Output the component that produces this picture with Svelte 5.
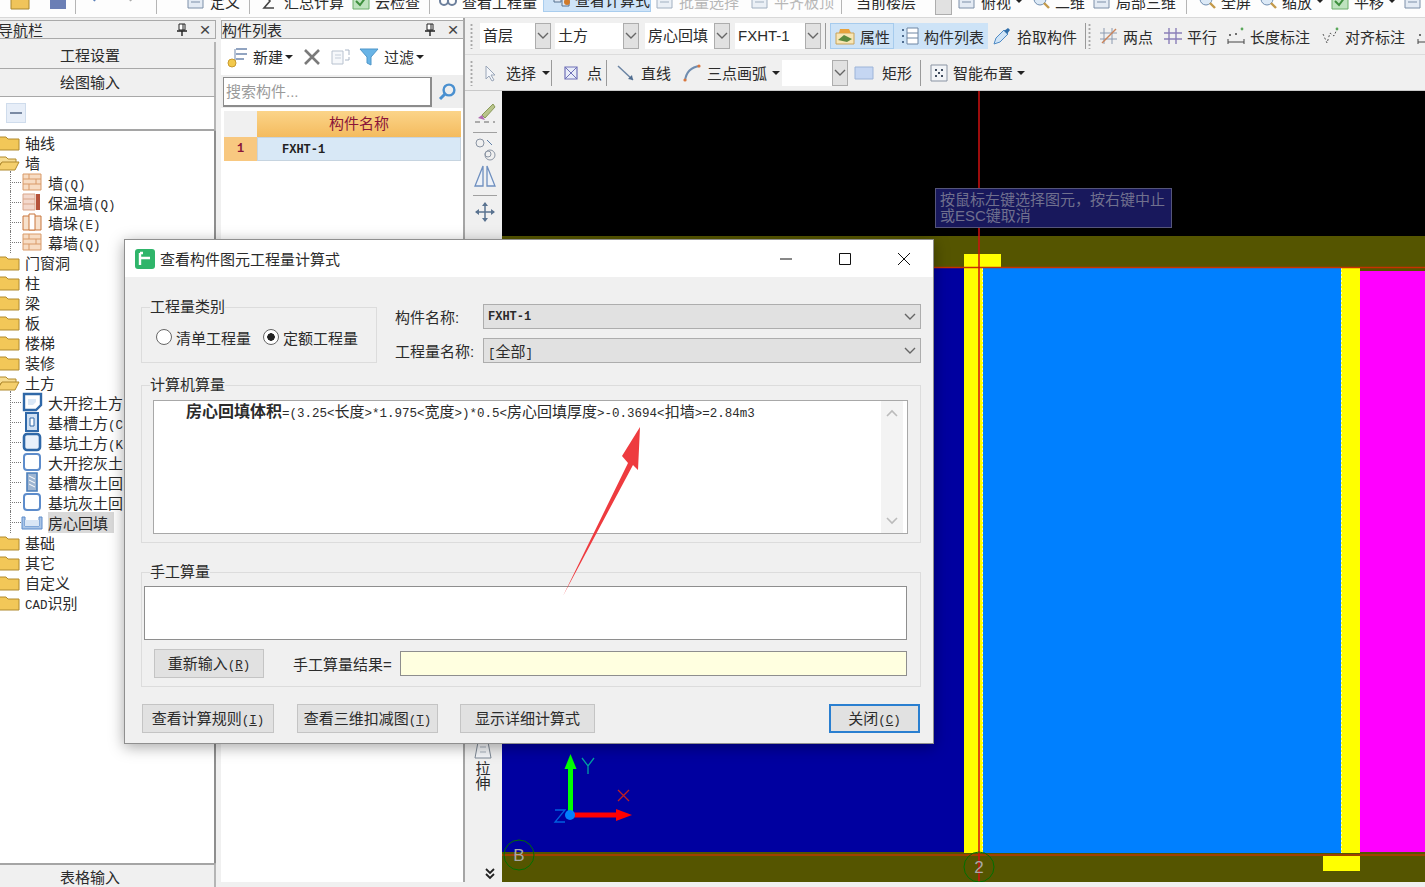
<script>
  const topItems = [
    { icon: 'folder', w: 38 }, { icon: 'save', w: 27 }, { sep: true, w: 15 },
    { icon: 'undo', w: 25 }, { icon: 'redo', w: 41 }, { sep: true, w: 20 }, { grip: true, w: 10 },
    { icon: 'doc', label: '定义', w: 63 }, { sep: true, w: 11 },
    { icon: 'sum', label: '汇总计算', w: 91 }, { icon: 'check', label: '云检查', w: 78 }, { sep: true, w: 9 },
    { icon: 'link', label: '查看工程量', w: 105 }, { icon: 'calc', label: '查看计算式', w: 108, active: true },
    { w: 4 }, { icon: 'doc', label: '批量选择', w: 95, dim: true }, { icon: 'doc', label: '平齐板顶', w: 91, dim: true },
    { sep: true, w: 15 }, { label: '当前楼层', w: 79 }, { combo: true, w: 22 },
    { icon: 'doc', label: '俯视', w: 74, caret: true }, { icon: 'zoom', label: '二维', w: 61 },
    { icon: 'doc', label: '局部三维', w: 94 }, { sep: true, w: 11 },
    { icon: 'zoom', label: '全屏', w: 61 }, { icon: 'zoom', label: '缩放', w: 72, caret: true },
    { icon: 'check', label: '平移', w: 73, caret: true }, { icon: 'doc', w: 22 }
  ];

  const combos = [
    { label: '首层', w: 55, gap: 4 },
    { label: '土方', w: 68, gap: 6 },
    { label: '房心回填', w: 69, gap: 5 },
    { label: 'FXHT-1', w: 70, gap: 0 }
  ];

  const tree = [
    { label: '轴线', kind: 'closed' },
    { label: '墙', kind: 'open' },
    { label: '墙(Q)', kind: 'brick', child: true },
    { label: '保温墙(Q)', kind: 'insul', child: true },
    { label: '墙垛(E)', kind: 'pier', child: true },
    { label: '幕墙(Q)', kind: 'brick', child: true },
    { label: '门窗洞', kind: 'closed' },
    { label: '柱', kind: 'closed' },
    { label: '梁', kind: 'closed' },
    { label: '板', kind: 'closed' },
    { label: '楼梯', kind: 'closed' },
    { label: '装修', kind: 'closed' },
    { label: '土方', kind: 'open' },
    { label: '大开挖土方', kind: 'notch', child: true },
    { label: '基槽土方(C', kind: 'trench', child: true },
    { label: '基坑土方(K', kind: 'pit', child: true },
    { label: '大开挖灰土', kind: 'blank', child: true },
    { label: '基槽灰土回', kind: 'hatch', child: true },
    { label: '基坑灰土回', kind: 'blank', child: true },
    { label: '房心回填', kind: 'fill', child: true, selected: true },
    { label: '基础', kind: 'closed' },
    { label: '其它', kind: 'closed' },
    { label: '自定义', kind: 'closed' },
    { label: 'CAD识别', kind: 'closed' }
  ];

  const formula = '=(3.25<长度>*1.975<宽度>)*0.5<房心回填厚度>-0.3694<扣墙>=2.84m3';
</script>

{#snippet mixed(text)}{#each text.split(/([\x00-\x7f]+)/) as part, i}{#if i % 2}<span class="ascii">{part}</span>{:else}{part}{/if}{/each}{/snippet}

{#snippet pin()}
  <svg class="dock-pin" width="10" height="13" viewBox="0 0 10 13"><path d="M2 1h6v6H2z" fill="#fff" stroke="#222" /><path d="M6 1v6" stroke="#222" /><path d="M0 8h10M5 8v5" stroke="#222" stroke-width="1.4" /></svg>
{/snippet}

{#snippet icon(name)}
  <svg class="ic" width="20" height="20" viewBox="0 0 20 20">
    {#if name === 'folder'}
      <path d="M1 5h7l2 2h9v11H1z" fill="#f0c45a" stroke="#a8862f" />
    {:else if name === 'save'}
      <path d="M2 2h16v16H2z" fill="#6b7fb5" /><path d="M5 2h10v7H5z" fill="#dfe6f2" />
    {:else if name === 'undo'}
      <path d="M4 10c3-6 9-6 13-2" fill="none" stroke="#5a7fb8" stroke-width="2" />
    {:else if name === 'redo'}
      <path d="M16 10c-3-6-9-6-13-2" fill="none" stroke="#aaa" stroke-width="2" />
    {:else if name === 'doc'}
      <path d="M2 2h15v15H2z" fill="#e4ebf4" stroke="#7d8fa8" /><path d="M5 7h9M5 11h9" stroke="#7d8fa8" />
    {:else if name === 'sum'}
      <path d="M14 3H4l6 7-6 7h10" fill="none" stroke="#444" stroke-width="1.6" />
    {:else if name === 'check'}
      <path d="M2 2h16v16H2z" fill="#bfe3bf" stroke="#6aae6a" /><path d="M5 10l4 4 6-8" fill="none" stroke="#3d8f3d" stroke-width="2" />
    {:else if name === 'link'}
      <circle cx="6" cy="10" r="4" fill="none" stroke="#6c7f9c" stroke-width="2" /><circle cx="14" cy="10" r="4" fill="none" stroke="#6c7f9c" stroke-width="2" />
    {:else if name === 'calc'}
      <path d="M2 6h7v7H2zM10 10h7v7h-7z" fill="#dfe8f4" stroke="#54708f" /><circle cx="15" cy="13" r="3" fill="#d07a2a" />
    {:else if name === 'zoom'}
      <circle cx="9" cy="8" r="6" fill="#dce9f6" stroke="#6f8db0" /><path d="M13 12l5 5" stroke="#c49a4a" stroke-width="2.4" />
    {:else if name === 'attr'}
      <path d="M1 7h18v11H1z" fill="#f8e6b4" stroke="#c7a25a" /><path d="M3 14l6-5 8 4-5 3z" fill="#5d8a3e" /><path d="M5 3h9l2 4H4z" fill="#e8a23c" />
    {:else if name === 'list'}
      <path d="M7 2h11v16H7z" fill="#fff" stroke="#6f86a3" /><path d="M7 7h11M7 12h11" stroke="#6f86a3" /><path d="M2 4h3M2 10h3M2 16h3" stroke="#4f6c8f" stroke-width="2" stroke-dasharray="2 1" />
    {:else if name === 'pick'}
      <path d="M2 18l2-6 8-8 4 4-8 8z" fill="#cfe4f7" stroke="#4f8ac4" /><path d="M12 5l4-3 2 2-3 4z" fill="#2f6eaa" />
    {:else if name === 'two'}
      <path d="M5 2v16M13 2v16M1 7h17M1 13h17" stroke="#8c9ab0" /><path d="M3 17L17 3" stroke="#c9835a" stroke-width="1.5" />
    {:else if name === 'para'}
      <path d="M6 2v16M13 2v16M1 7h18M1 13h18" stroke="#8a7fb8" stroke-width="1.4" />
    {:else if name === 'dim'}
      <path d="M2 13v5M18 13v5M2 16h16" stroke="#444" /><circle cx="4" cy="9" r="1" fill="#444" /><circle cx="10" cy="8" r="1" fill="#444" /><circle cx="16" cy="3" r="1.4" fill="#5aa85a" />
    {:else if name === 'dim2'}
      <path d="M2 8l4 9 3-10 4 3 3-7" fill="none" stroke="#555" stroke-dasharray="2 2" /><circle cx="16" cy="3" r="1.4" fill="#5aa85a" />
    {:else if name === 'cursor'}
      <path d="M6 3v13l3-3 3 5 2-1-3-5h4z" fill="#f4f6fa" stroke="#9aa6b8" />
    {:else if name === 'point'}
      <path d="M4 4h12v12H4z" fill="#e8ecf8" stroke="#6f70b8" stroke-width="1.2" /><path d="M4 4l12 12M16 4L4 16" stroke="#6f70b8" />
    {:else if name === 'line'}
      <path d="M2 3l15 14" stroke="#6b84a3" stroke-width="1.5" /><path d="M17 17l-5-1 4-4z" fill="#4f6c8f" />
    {:else if name === 'arc'}
      <path d="M3 18C4 9 9 4 18 3" fill="none" stroke="#6f8db0" stroke-width="2" /><circle cx="3" cy="17" r="1.6" fill="#d9763c" /><circle cx="17" cy="3" r="1.6" fill="#d9763c" />
    {:else if name === 'rect'}
      <path d="M1 4h18v12H1z" fill="#c5d6f2" stroke="#9db4d8" />
    {:else if name === 'smart'}
      <path d="M2 2h16v16H2z" fill="#f2f4f7" stroke="#8a94a3" /><path d="M6 6h2v2H6zM12 6h2v2h-2zM6 12h2v2H6zM12 12h2v2h-2zM9 9h2v2H9z" fill="#3f4c5e" />
    {/if}
  </svg>
{/snippet}

{#snippet treeIcon(kind)}
  <svg class="tree-ic" width="22" height="20" viewBox="0 0 22 20">
    {#if kind === 'closed'}
      <path d="M-3 5h9l2 2h11v11H-3z" fill="#f2c758" stroke="#b08a2e" />
    {:else if kind === 'open'}
      <path d="M-3 5h9l2 2h8v4H1l-4 7z" fill="#f7dc91" stroke="#b08a2e" /><path d="M-3 18l5-8h17l-4 8z" fill="#f5cf6c" stroke="#b08a2e" />
    {:else if kind === 'brick'}
      <path d="M2 2h18v16H2z" fill="#f7dcc3" stroke="#d99a68" /><path d="M2 7h18M2 12h18M8 2v5M15 7v5M8 12v6" stroke="#d99a68" />
    {:else if kind === 'insul'}
      <path d="M2 2h12v16H2z" fill="#f3d8cc" stroke="#d9a58a" /><path d="M15 2h4v16h-4z" fill="#b5523a" /><path d="M2 7h12M2 12h12" stroke="#d9a58a" />
    {:else if kind === 'pier'}
      <path d="M2 4h18v14H2z" fill="#f7e1cc" stroke="#c9763c" /><path d="M8 2h6v16H8z" fill="#fff" stroke="#c9763c" />
    {:else if kind === 'notch'}
      <path d="M3 2h17v11l-5 5H3z" fill="#fff" stroke="#2f68a8" stroke-width="2.4" /><path d="M7 7h8v3l-3 3H7z" fill="#dbe8f6" />
    {:else if kind === 'trench'}
      <path d="M5 1h12v18H5z" fill="#cfe0f3" stroke="#2f68a8" stroke-width="2" /><path d="M9 6h4v8H9z" fill="#fff" stroke="#2f68a8" />
    {:else if kind === 'pit'}
      <rect x="3" y="2" width="16" height="16" rx="3" fill="#e8f0fa" stroke="#2f68a8" stroke-width="2.6" />
    {:else if kind === 'blank'}
      <rect x="3" y="2" width="16" height="16" rx="3" fill="#fff" stroke="#5d8ccb" stroke-width="2" />
    {:else if kind === 'hatch'}
      <path d="M6 1h10v18H6z" fill="#9fb6d2" stroke="#4c7fbb" stroke-width="1.6" /><path d="M8 4l6 3M8 8l6 3M8 12l6 3" stroke="#fff" />
    {:else if kind === 'fill'}
      <path d="M1 5h3v9h14V5h3v12H1z" fill="#a9c4e6" stroke="#5d8ccb" /><path d="M4 8h14v6H4z" fill="#dae6f5" />
    {/if}
  </svg>
{/snippet}

{#snippet chevron()}
  <svg width="12" height="8" viewBox="0 0 12 8"><path d="M1 1l5 5 5-5" fill="none" stroke="#666" stroke-width="1.4" /></svg>
{/snippet}

<div class="app">
  <div class="topbar">
    {#each topItems as item}
      <div class="top-item" class:active={item.active} class:dim={item.dim} class:top-sep={item.sep} style="width: {item.w}px">
        {#if item.combo}<span class="top-combo"></span>{/if}
        {#if item.icon}{@render icon(item.icon)}{/if}
        {#if item.label}<span>{item.label}</span>{/if}
        {#if item.caret}<i class="caret"></i>{/if}
      </div>
    {/each}
  </div>

  <div class="main">
    <aside class="nav">
      <div class="dock-head nav-head">
        <span class="dock-title">导航栏</span>
        {@render pin()}
        <span class="dock-close">×</span>
      </div>
      <div class="nav-btn first">工程设置</div>
      <div class="nav-btn">绘图输入</div>
      <div class="tree-tools">
        <span class="minus"><i></i></span>
      </div>
      <div class="tree">
        {#each tree as row}
          <div class="tree-row" class:child={row.child}>
            {#if row.child}<i class="dots"></i>{/if}
            {@render treeIcon(row.kind)}
            <span class="tree-label" class:selected={row.selected}>{@render mixed(row.label)}</span>
          </div>
        {/each}
      </div>
      <div class="nav-btn nav-bottom">表格输入</div>
    </aside>

    <section class="list">
      <div class="dock-head">
        <span class="dock-title list-title">构件列表</span>
        {@render pin()}
        <span class="dock-close">×</span>
      </div>
      <div class="list-tools">
        <svg width="28" height="26" viewBox="0 0 28 26">
          <path d="M11 5h11M11 10h11M11 15h8" stroke="#6d86ad" stroke-width="1.6" /><path d="M10 5v12" stroke="#6d86ad" />
          <circle cx="7" cy="19" r="4" fill="#f2c94c" stroke="#c99a2e" />
        </svg>
        <span class="lt-new">新建</span><i class="caret"></i>
        <svg class="lt-x" width="16" height="16" viewBox="0 0 16 16"><path d="M1 1l14 14M15 1L1 15" stroke="#7a7a7a" stroke-width="2.6" /></svg>
        <svg class="lt-copy" width="20" height="18" viewBox="0 0 20 18"><path d="M1 3h11v13H1z" fill="#f6f8fb" stroke="#b8c2cf" /><path d="M4 7h6M4 10h6" stroke="#c5ced9" /><path d="M14 2h4v5M14 12h4V9" fill="none" stroke="#aab6c6" /></svg>
        <svg class="lt-filter" width="20" height="18" viewBox="0 0 20 18"><path d="M1 1h18l-7 8v8l-4-2V9z" fill="#69b4e6" stroke="#4f96c9" /></svg>
        <span class="lt-filter-text">过滤</span><i class="caret"></i>
      </div>
      <div class="search">
        <input class="search-input" placeholder="搜索构件..." />
        <svg class="search-ic" width="20" height="20" viewBox="0 0 20 20"><circle cx="11" cy="8" r="5.4" fill="none" stroke="#4a90d0" stroke-width="2.4" /><path d="M7 12l-5 5" stroke="#4a90d0" stroke-width="3" /></svg>
      </div>
      <div class="grid">
        <div class="corner"></div>
        <div class="col-head">构件名称</div>
        <div class="row-no">1</div>
        <div class="row-name">FXHT-1</div>
      </div>
    </section>

    <section class="work">
      <div class="bar bar-one">
        <i class="grip"></i>
        {#each combos as c}
          <div class="combo" style="margin-right: {c.gap}px">
            <span class="combo-text" style="width: {c.w}px">{c.label}</span>
            <span class="combo-btn">{@render chevron()}</span>
          </div>
        {/each}
        <i class="vsep"></i>
        <div class="tool on w-attr">{@render icon('attr')}<span>属性</span></div>
        <div class="tool on2 w-list">{@render icon('list')}<span>构件列表</span></div>
        <div class="tool w-pick">{@render icon('pick')}<span>拾取构件</span></div>
        <i class="vsep wide"></i>
        <i class="grip"></i>
        <div class="tool w-two">{@render icon('two')}<span>两点</span></div>
        <div class="tool w-two">{@render icon('para')}<span>平行</span></div>
        <div class="tool w-dim">{@render icon('dim')}<span>长度标注</span></div>
        <div class="tool w-dim">{@render icon('dim2')}<span>对齐标注</span></div>
        <div class="tool cut">{@render icon('dim')}</div>
      </div>

      <div class="bar bar-two">
        <i class="grip"></i>
        <div class="tool t-sel">{@render icon('cursor')}<span>选择</span><i class="caret"></i></div>
        <i class="vsep"></i>
        <div class="tool t-pt">{@render icon('point')}<span>点</span></div>
        <i class="vsep"></i>
        <div class="tool t-line">{@render icon('line')}<span>直线</span></div>
        <div class="tool t-arc">{@render icon('arc')}<span>三点画弧</span><i class="caret"></i></div>
        <div class="combo t-combo">
          <span class="combo-text blank"></span>
          <span class="combo-btn">{@render chevron()}</span>
        </div>
        <div class="tool t-rect">{@render icon('rect')}<span>矩形</span></div>
        <i class="vsep"></i>
        <div class="tool t-smart">{@render icon('smart')}<span>智能布置</span><i class="caret"></i></div>
      </div>

      <div class="stage">
        <div class="vbar">
          <svg class="v-ic" width="24" height="24" viewBox="0 0 24 24"><path d="M20 3L9 14l3 3L22 6z" fill="#b8c48a" stroke="#8a9a5a" /><path d="M9 14l-4 3 7 2z" fill="#b06ab0" /><path d="M2 21h20" stroke="#666" stroke-dasharray="5 4" /></svg>
          <i class="v-sep"></i>
          <svg class="v-ic tight" width="24" height="24" viewBox="0 0 24 24"><circle cx="7" cy="6" r="4" fill="none" stroke="#8a94a3" /><circle cx="17" cy="18" r="5" fill="none" stroke="#8a94a3" /><circle cx="15" cy="17" r="3" fill="none" stroke="#8a94a3" /><path d="M14 3l5 5" stroke="#5d7fa8" /></svg>
          <svg class="v-ic tight" width="24" height="24" viewBox="0 0 24 24"><path d="M10 2v20H2zM14 2v20h8z" fill="#eef2f8" stroke="#6e8fbf" stroke-width="1.3" /></svg>
          <i class="v-sep"></i>
          <svg class="v-ic" width="20" height="20" viewBox="0 0 20 20"><path d="M10 1v18M1 10h18" stroke="#5a7390" stroke-width="1.5" /><path d="M10 0l3 4H7zM10 20l3-4H7zM0 10l4-3v6zM20 10l-4-3v6z" fill="#5a7390" /></svg>
          <div class="v-stretch">
            <svg width="22" height="18" viewBox="0 0 22 18"><path d="M3 17L6 1h10l3 16z" fill="#f4f6f9" stroke="#7c8794" /><path d="M8 6h6M8 11h6" stroke="#a8b1bd" /></svg>
            <span class="first-char">拉</span>
            <span>伸</span>
          </div>
          <svg class="v-more" width="10" height="12" viewBox="0 0 10 12"><path d="M1 1l4 4 4-4M1 6l4 4 4-4" fill="none" stroke="#222" stroke-width="1.8" /></svg>
        </div>

        <svg class="canvas" width="923" height="791" viewBox="502 91 923 791">
          <rect x="502" y="91" width="923" height="791" fill="#000" />
          <rect x="502" y="236" width="923" height="646" fill="#555500" />
          <rect x="502" y="268" width="462" height="584" fill="#0000a0" />
          <rect x="983" y="268" width="358" height="585" fill="#0080ff" />
          <rect x="1360" y="271" width="65" height="581" fill="#ff00ff" />
          <rect x="964" y="268" width="19" height="585" fill="#ffff00" />
          <rect x="1341" y="268" width="19" height="585" fill="#ffff00" />
          <rect x="964" y="254" width="37" height="13" fill="#ffff00" />
          <rect x="1323" y="856" width="37" height="15" fill="#ffff00" />
          <path d="M982.5 268v585M1341.5 268v585" stroke="#fff" stroke-dasharray="2 2" opacity=".7" />
          <path d="M502 267.5h923" stroke="#c83200" stroke-width="1.5" />
          <path d="M502 855h923" stroke="#a04000" stroke-width="2" />
          <path d="M979 91v791" stroke="#d01010" stroke-width="1.5" />

          <rect x="935.5" y="188.5" width="236" height="39" fill="#18185c" stroke="#55557a" />
          <text x="940" y="205" class="tip">按鼠标左键选择图元，按右键中止</text>
          <text x="940" y="221" class="tip">或ESC键取消</text>

          <path d="M570.5 815v-50" stroke="#00ff00" stroke-width="5" />
          <path d="M570.5 754l6 15h-12z" fill="#00ff00" />
          <path d="M570 815h48" stroke="#ff0000" stroke-width="5" />
          <path d="M632 815l-16-6v12z" fill="#ff0000" />
          <circle cx="570" cy="815" r="5" fill="#0080ff" />
          <path d="M582 758l6 8 6-8M588 766v8" stroke="#00a0a0" stroke-width="1.3" fill="none" />
          <path d="M618 790l11 11M629 790l-11 11" stroke="#c02020" stroke-width="1.3" />
          <path d="M555 810h10l-10 12h10" stroke="#0060e0" stroke-width="1.3" fill="none" />

          <circle cx="519" cy="855" r="15" fill="none" stroke="#007000" />
          <text x="519" y="861" class="axis">B</text>
          <circle cx="979" cy="867" r="15" fill="none" stroke="#007000" />
          <text x="979" y="873" class="axis">2</text>
        </svg>
      </div>
      <div class="foot"></div>
    </section>
  </div>

  <div class="dialog">
    <header class="dlg-title">
      <svg width="20" height="20" viewBox="0 0 20 20"><rect width="20" height="20" rx="3" fill="#2fb56a" /><path d="M5 4v12M5 9h10M5 4h3" stroke="#fff" stroke-width="2.4" fill="none" /></svg>
      <span class="dlg-name">查看构件图元工程量计算式</span>
      <span class="win-btn"><svg width="14" height="14" viewBox="0 0 14 14"><path d="M1 7h12" stroke="#111" /></svg></span>
      <span class="win-btn"><svg width="14" height="14" viewBox="0 0 14 14"><path d="M1.5 1.5h11v11h-11z" fill="none" stroke="#111" /></svg></span>
      <span class="win-btn"><svg width="14" height="14" viewBox="0 0 14 14"><path d="M1 1l12 12M13 1L1 13" stroke="#111" /></svg></span>
    </header>

    <div class="dlg-body">
      <div class="dlg-top">
        <fieldset class="kind">
          <legend>工程量类别</legend>
          <div class="kind-row">
            <label class="radio"><i class="dot"></i>清单工程量</label>
            <label class="radio"><i class="dot on"></i>定额工程量</label>
          </div>
        </fieldset>
        <div class="fields">
          <div class="field">
            <span class="field-label">构件名称:</span>
            <div class="select"><span class="mono">FXHT-1</span>{@render chevron()}</div>
          </div>
          <div class="field">
            <span class="field-label">工程量名称:</span>
            <div class="select"><span>{@render mixed('[全部]')}</span>{@render chevron()}</div>
          </div>
        </div>
      </div>

      <fieldset class="auto">
        <legend>计算机算量</legend>
        <div class="formula">
          <p class="formula-text"><b>房心回填体积</b>{@render mixed(formula)}</p>
          <div class="scroll">
            <svg width="12" height="8" viewBox="0 0 12 8"><path d="M1 7l5-5 5 5" fill="none" stroke="#bbb" stroke-width="1.6" /></svg>
            <svg width="12" height="8" viewBox="0 0 12 8"><path d="M1 1l5 5 5-5" fill="none" stroke="#bbb" stroke-width="1.6" /></svg>
          </div>
        </div>
      </fieldset>

      <fieldset class="manual">
        <legend>手工算量</legend>
        <div class="manual-box"></div>
        <div class="manual-row">
          <button class="btn redo-btn">重新输入<span class="ascii">(<u>R</u>)</span></button>
          <span class="result-label">手工算量结果=</span>
          <div class="result"></div>
        </div>
      </fieldset>

      <div class="actions">
        <button class="btn a1">查看计算规则<span class="ascii">(<u>I</u>)</span></button>
        <button class="btn a2">查看三维扣减图<span class="ascii">(<u>T</u>)</span></button>
        <button class="btn a3">显示详细计算式</button>
        <button class="btn close">关闭<span class="ascii">(<u>C</u>)</span></button>
      </div>
    </div>
  </div>

  <svg class="note" width="1425" height="887" viewBox="0 0 1425 887">
    <path d="M563 596L628 463l-6-7 18-29-2 43-5-5z" fill="#ee3b3f" />
  </svg>
</div>

<style>
  :global(body) {
    margin: 0;
    background: #f0f0f0;
    font-family: "Liberation Sans", "Noto Sans CJK SC", sans-serif;
    font-size: 15px;
    color: #2b2b2b;
  }

  .app {
    position: relative;
    width: 1425px;
    height: 887px;
    overflow: hidden;
    display: flex;
    flex-direction: column;
  }

  .ic {
    flex: none;
  }

  .ascii {
    font-family: "Liberation Mono", monospace;
    font-size: 12.5px;
  }

  .caret {
    flex: none;
    width: 0;
    height: 0;
    border-left: 4px solid transparent;
    border-right: 4px solid transparent;
    border-top: 4px solid #222;
  }

  /* top toolbar, cut off by the window edge */
  .topbar {
    height: 17px;
    flex: none;
    padding-left: 10px;
    display: flex;
    overflow: hidden;
    background: #fdfdfd;
    border-bottom: 1px solid #d8d8d8;
  }

  .top-item {
    flex: none;
    height: 20px;
    margin-top: -9px;
    display: flex;
    align-items: center;
    gap: 4px;
    white-space: nowrap;
    box-sizing: border-box;
  }

  .top-item.active {
    height: 26px;
    background: #cfe4f8;
    border: 1px solid #a9cdee;
    padding-left: 8px;
    gap: 3px;
    margin-top: -14px;
  }

  .top-item.dim {
    color: #9a9a9a;
    opacity: 0.7;
  }

  .top-sep::before {
    content: '';
    width: 1px;
    height: 26px;
    background: #b5b5b5;
  }

  .top-combo {
    width: 15px;
    height: 26px;
    background: #e1e1e1;
    border: 1px solid #adadad;
  }

  .main {
    flex: 1;
    display: flex;
    min-height: 0;
  }

  /* docked panels */
  .dock-head {
    height: 17px;
    margin-top: 2px;
    flex: none;
    display: flex;
    align-items: center;
    background: #eeeeee;
    border: 1px solid #a9a9a9;
    border-left: none;
    overflow: hidden;
  }

  .dock-title {
    margin-left: -2px;
    flex: 1;
    font-size: 15px;
  }

  .list-title {
    margin-left: 0;
  }

  .dock-pin {
    flex: none;
    margin-right: 8px;
  }

  .dock-close {
    width: 20px;
    font-size: 19px;
    line-height: 17px;
    text-align: center;
    color: #444;
  }

  .nav {
    width: 216px;
    flex: none;
    margin-right: 5px;
    display: flex;
    flex-direction: column;
  }

  .nav-btn {
    height: 27px;
    flex: none;
    background: #f0f0f0;
    border-bottom: 1px solid #a8a8a8;
    border-right: 2px solid #b5b5b5;
    box-sizing: content-box;
    width: 214px;
    text-align: center;
    line-height: 27px;
    text-indent: -34px;
  }

  .nav-btn.first {
    height: 26px;
    margin-top: 3px;
  }

  .tree-tools {
    height: 32px;
    flex: none;
    width: 214px;
    background: #fff;
    border-right: 2px solid #b5b5b5;
    border-bottom: 2px solid #a5a5a5;
    box-sizing: content-box;
    display: flex;
    align-items: center;
  }

  .minus {
    width: 18px;
    height: 18px;
    margin-left: 6px;
    display: flex;
    align-items: center;
    justify-content: center;
    background: #e7eef8;
    border: 1px solid #cfdcec;
  }

  .minus i {
    width: 12px;
    height: 2px;
    background: #7a8aa3;
  }

  .tree {
    flex: 1;
    width: 214px;
    background: #fff;
    border-right: 2px solid #8e8e8e;
    padding-top: 1px;
    box-sizing: content-box;
  }

  .tree-row {
    height: 20px;
    display: flex;
    align-items: center;
    white-space: nowrap;
  }

  .tree-ic {
    flex: none;
    overflow: visible;
  }

  .tree-label {
    margin-left: 3px;
  }

  .tree-row.child {
    padding-left: 10px;
    position: relative;
  }

  .dots {
    width: 11px;
    border-top: 1px dotted #777;
  }

  .tree-row.child .tree-label {
    margin-left: 5px;
  }

  .tree-row.child::before {
    content: '';
    position: absolute;
    left: 10px;
    top: -1px;
    height: 22px;
    border-left: 1px dotted #777;
  }

  .tree-label.selected {
    background: #d9d9d9;
    padding: 0 6px 0 0;
  }

  .nav-bottom {
    height: 22px;
    line-height: 26px;
    border-bottom: none;
    border-top: 2px solid #a5a5a5;
  }

  .list {
    width: 244px;
    flex: none;
    display: flex;
    flex-direction: column;
    background: #fff;
    border-right: 2px solid #a5a5a5;
    box-sizing: border-box;
    height: 864px;
  }

  .list .dock-head {
    border-left: 1px solid #a9a9a9;
    margin-right: -1px;
  }

  .list-tools {
    height: 31px;
    flex: none;
    margin-top: 3px;
    padding: 0 0 2px 4px;
    box-sizing: border-box;
    display: flex;
    align-items: center;
  }

  .lt-new {
    margin-right: 2px;
  }

  .lt-x {
    margin-left: 11px;
  }

  .lt-copy {
    margin-left: 11px;
  }

  .lt-filter {
    margin-left: 8px;
  }

  .lt-filter-text {
    margin-left: 5px;
    margin-right: 2px;
  }

  .search {
    height: 33px;
    flex: none;
    margin-top: 2px;
    display: flex;
    align-items: center;
    background: #eeeeee;
  }

  .search-input {
    width: 209px;
    height: 30px;
    margin-left: 2px;
    box-sizing: border-box;
    border: 1px solid #8c8c8c;
    border-bottom-width: 2px;
    border-right-width: 2px;
    padding: 0 2px;
    font: inherit;
    background: #fff;
  }

  .search-input::placeholder {
    color: #9a9a9a;
  }

  .search-ic {
    margin-left: 6px;
  }

  .grid {
    margin: 3px 2px 0 3px;
    display: grid;
    grid-template-columns: 33px 1fr;
    grid-template-rows: 26px 24px;
  }

  .corner {
    background: #f0f0f0;
  }

  .col-head {
    background: linear-gradient(#fbd489, #f4bb5e);
    color: #8a1538;
    text-align: center;
    line-height: 26px;
  }

  .row-no {
    background: #f8c880;
    color: #8a1538;
    text-align: center;
    font: bold 12px/24px "Liberation Mono", monospace;
  }

  .row-name {
    background: #d8e8f6;
    border: 1px solid #c6d4e0;
    box-sizing: border-box;
    padding-left: 24px;
    font: bold 12px/24px "Liberation Mono", monospace;
    color: #222;
  }

  /* drawing area */
  .work {
    flex: 1;
    min-width: 0;
    display: flex;
    flex-direction: column;
    background: #f0f0f0;
  }

  .bar {
    flex: none;
    display: flex;
    align-items: center;
    white-space: nowrap;
    overflow: hidden;
    padding-left: 5px;
  }

  .bar-one {
    height: 37px;
    border-bottom: 1px solid #dcdcdc;
    box-sizing: border-box;
  }

  .bar-two {
    height: 36px;
    border-bottom: 1px solid #c9c9c9;
    box-sizing: border-box;
  }

  .grip {
    flex: none;
    width: 3px;
    height: 26px;
    margin-right: 7px;
    background: radial-gradient(circle, #a8a8a8 1px, transparent 1.2px) 0 0 / 3px 4px;
  }

  .combo {
    flex: none;
    display: flex;
    align-items: center;
  }

  .combo-text {
    display: block;
    height: 26px;
    line-height: 26px;
    padding-left: 3px;
    box-sizing: border-box;
    background: #fff;
  }

  .combo-text.blank {
    width: 50px;
  }

  .combo-btn {
    width: 16px;
    height: 26px;
    box-sizing: border-box;
    background: #e1e1e1;
    border: 1px solid #adadad;
    display: flex;
    align-items: center;
    justify-content: center;
  }

  .vsep {
    flex: none;
    width: 1px;
    height: 26px;
    background: #9a9a9a;
    margin: 0 4px;
  }

  .vsep.wide {
    margin: 0 2px 0 7px;
  }

  .tool {
    flex: none;
    height: 26px;
    display: flex;
    align-items: center;
    gap: 4px;
    box-sizing: border-box;
    padding-left: 3px;
  }

  .tool.on {
    background: #cde3f7;
    border: 1px solid #a6cbed;
  }

  .tool.on2 {
    background: #cde3f7;
  }

  .w-attr { width: 64px; padding-left: 4px; gap: 5px; }
  .w-list { width: 94px; padding-left: 6px; }
  .w-pick { width: 90px; padding-left: 4px; gap: 5px; }
  .w-two { width: 64px; padding-left: 1px; }
  .w-dim { width: 95px; padding-left: 0; }
  .cut { width: 24px; padding-left: 0; }

  .t-sel { width: 67px; padding-left: 0; gap: 6px; }
  .t-pt { width: 46px; padding-left: 5px; gap: 6px; }
  .t-line { width: 71px; padding-left: 5px; gap: 5px; }
  .t-arc { width: 100px; padding-left: 0; gap: 5px; }
  .t-combo { margin-right: 6px; }
  .t-rect { width: 62px; padding-left: 0; gap: 8px; }
  .t-smart { width: 102px; padding-left: 4px; }

  .stage {
    height: 791px;
    flex: none;
    display: flex;
  }

  .vbar {
    width: 37px;
    flex: none;
    box-sizing: border-box;
    padding-left: 3px;
    padding-top: 10px;
    display: flex;
    flex-direction: column;
    align-items: center;
    background: #f0f0f0;
  }

  .v-ic {
    flex: none;
    margin-bottom: 5px;
  }

  .v-ic.tight {
    margin-top: -2px;
  }

  .v-sep {
    width: 24px;
    height: 1px;
    margin: 2px 0 6px;
    background: #a0a0a0;
  }

  .v-stretch {
    margin-top: 514px;
    margin-left: -4px;
    display: flex;
    flex-direction: column;
    align-items: center;
    line-height: 15px;
  }

  .first-char {
    margin-top: 2px;
  }

  .v-more {
    margin-top: auto;
    margin-bottom: 2px;
    margin-left: 10px;
  }

  .canvas {
    display: block;
    flex: none;
  }

  .tip {
    fill: #70708e;
    font-size: 15px;
  }

  .axis {
    fill: #a8a8a8;
    font-size: 17px;
    text-anchor: middle;
  }

  .foot {
    flex: 1;
    background: #f0f0f0;
  }

  /* dialog */
  .dialog {
    position: absolute;
    left: 124px;
    top: 239px;
    width: 810px;
    height: 505px;
    box-sizing: border-box;
    background: #f0f0f0;
    border: 1px solid #8f8f8f;
    box-shadow: 0 3px 14px rgba(0, 0, 0, 0.35);
  }

  .dlg-title {
    height: 37px;
    background: #fff;
    display: flex;
    align-items: center;
    padding-left: 10px;
  }

  .dlg-name {
    flex: 1;
    margin-left: 5px;
    font-size: 15px;
  }

  .win-btn {
    width: 59px;
    display: flex;
    justify-content: center;
  }

  .dlg-body {
    padding: 20px 12px 0 16px;
  }

  fieldset {
    margin: 0;
    padding: 0;
    border: 1px solid #dcdcdc;
    box-sizing: border-box;
    min-width: 0;
  }

  legend {
    margin-left: 8px;
    padding: 0;
    line-height: 20px;
    font-size: 15px;
  }

  .dlg-top {
    display: flex;
    height: 66px;
  }

  .kind {
    width: 236px;
    height: 66px;
  }

  .kind-row {
    display: flex;
    gap: 12px;
    padding: 8px 0 0 14px;
  }

  .radio {
    display: flex;
    align-items: center;
    gap: 4px;
    height: 24px;
    white-space: nowrap;
  }

  .dot {
    width: 16px;
    height: 16px;
    box-sizing: border-box;
    border: 1px solid #666;
    border-radius: 50%;
    background: #fff;
    display: block;
  }

  .dot.on {
    background: radial-gradient(circle, #222 3.5px, #fff 4px);
  }

  .fields {
    margin-left: 18px;
    padding-top: 7px;
    display: flex;
    flex-direction: column;
    gap: 9px;
  }

  .field {
    display: flex;
    align-items: center;
  }

  .field-label {
    width: 88px;
    white-space: nowrap;
  }

  .select {
    width: 438px;
    height: 25px;
    box-sizing: border-box;
    display: flex;
    align-items: center;
    justify-content: space-between;
    padding: 0 4px;
    background: #e1e1e1;
    border: 1px solid #adadad;
  }

  .mono {
    font: bold 12px "Liberation Mono", monospace;
  }

  .auto {
    margin-top: 12px;
    height: 168px;
    width: 780px;
  }

  .formula {
    width: 755px;
    height: 134px;
    margin: 5px 0 0 11px;
    box-sizing: border-box;
    background: #fff;
    border: 1px solid #a8a8a8;
    display: flex;
    justify-content: space-between;
  }

  .formula-text {
    margin: 0;
    padding-left: 32px;
    line-height: 22px;
    white-space: nowrap;
  }

  .formula-text b {
    font-size: 16px;
  }

  .scroll {
    width: 22px;
    margin-right: 4px;
    padding: 8px 0;
    box-sizing: border-box;
    background: #f3f3f3;
    display: flex;
    flex-direction: column;
    align-items: center;
    justify-content: space-between;
  }

  .manual {
    margin-top: 19px;
    height: 125px;
    width: 780px;
  }

  .manual-box {
    width: 763px;
    height: 54px;
    margin: 4px 0 0 2px;
    box-sizing: border-box;
    background: #fff;
    border: 1px solid #8e8e8e;
  }

  .manual-row {
    margin: 9px 0 0 2px;
    display: flex;
    align-items: center;
  }

  .btn {
    height: 29px;
    box-sizing: border-box;
    padding: 0 0 3px;
    background: #e1e1e1;
    border: 1px solid #c4c4c4;
    font: inherit;
    color: inherit;
    white-space: nowrap;
  }

  .redo-btn {
    width: 110px;
    margin-left: 10px;
  }

  .result-label {
    margin-left: 29px;
    width: 107px;
    white-space: nowrap;
  }

  .result {
    width: 507px;
    height: 25px;
    box-sizing: border-box;
    background: #ffffe0;
    border: 1px solid #8e8e8e;
  }

  .actions {
    margin-top: 17px;
    display: flex;
    padding-left: 1px;
  }

  .a1 { width: 132px; }
  .a2 { width: 141px; margin-left: 23px; }
  .a3 { width: 135px; margin-left: 22px; }

  .close {
    width: 91px;
    margin-left: 234px;
    border: 2px solid #2a7fd0;
  }

  .note {
    position: absolute;
    left: 0;
    top: 0;
    pointer-events: none;
  }
</style>
